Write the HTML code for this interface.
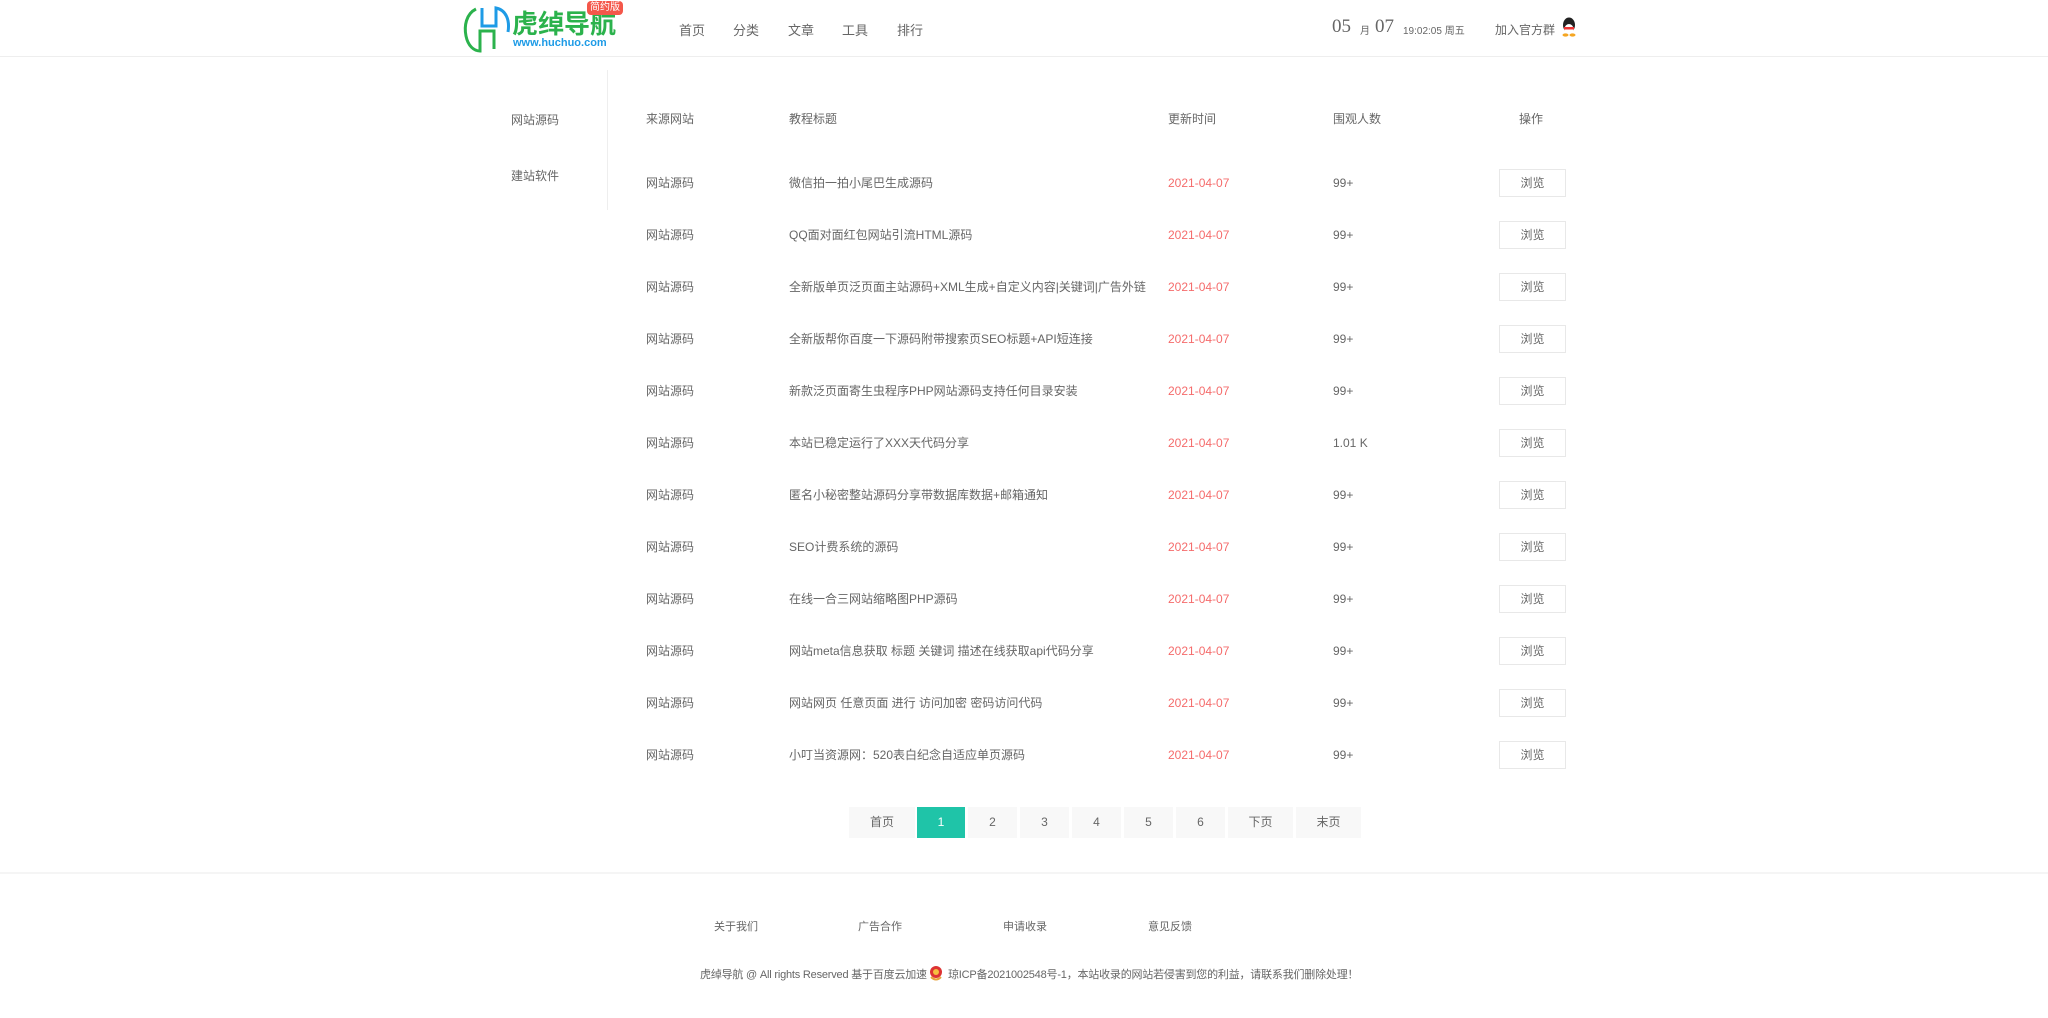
<!DOCTYPE html>
<html><head><meta charset="utf-8">
<style>
*{margin:0;padding:0;box-sizing:border-box}
body{width:2048px;height:1018px;background:#fff;font-family:"Liberation Sans","Noto Sans CJK SC",sans-serif;color:#666;font-size:12px;position:relative;overflow:hidden}
.a{position:absolute;white-space:nowrap}
.hd{position:absolute;left:0;top:0;width:2048px;height:57px;border-bottom:1px solid #eee}
.nav{top:20px;font-size:13px;color:#666}
.row{position:absolute;left:0;width:2048px;height:20px}
.row span{position:absolute;top:0;line-height:20px;white-space:nowrap;font-size:12px}
.btn{position:absolute;left:1499px;width:67px;height:28px;border:1px solid #e8e8e8;text-align:center;line-height:26px;font-size:12px;color:#666}
.pg{position:absolute;top:807px;height:31px;background:#f8f8f8;text-align:center;line-height:31px;font-size:12px;color:#666}
.red{color:#f56c6c}
</style></head><body>
<div class="hd"></div>
<svg class="a" style="left:462px;top:4px" width="52" height="50" viewBox="0 0 52 50">
<path d="M14 5 C4 10 2 22 4 32 C6 42 12 47 18 47 L18 27 L32 27 L32 45" fill="none" stroke="#2bb24c" stroke-width="3"/>
<path d="M20 4 L20 22 L34 22 L34 4 C44 6 48 16 46 28" fill="none" stroke="#1e9be6" stroke-width="3"/>
</svg>
<div class="a" style="left:512px;top:9px;font-size:26px;font-weight:bold;color:#2bb24c;letter-spacing:0;line-height:30px">虎绰导航</div>
<div class="a" style="left:513px;top:37px;font-size:11px;font-weight:bold;color:#1e9be6;line-height:12px">www.huchuo.com</div>
<div class="a" style="left:587px;top:1px;width:36px;height:14px;background:#f4574a;border-radius:4px;color:#fff;font-size:10px;line-height:14px;text-align:center">简约版</div>
<div class="a nav" style="left:679px">首页</div>
<div class="a nav" style="left:733px">分类</div>
<div class="a nav" style="left:788px">文章</div>
<div class="a nav" style="left:842px">工具</div>
<div class="a nav" style="left:897px">排行</div>
<div class="a" style="left:1332px;top:16px;font-size:19px;font-family:'Liberation Serif',serif;color:#666">05</div>
<div class="a" style="left:1360px;top:22px;font-size:10px">月</div>
<div class="a" style="left:1375px;top:16px;font-size:19px;font-family:'Liberation Serif',serif;color:#666">07</div>
<div class="a" style="left:1403px;top:22px;font-size:10px">19:02:05 周五</div>
<div class="a" style="left:1495px;top:21px;font-size:12px">加入官方群</div>
<svg class="a" style="left:1561px;top:17px" width="16" height="20" viewBox="0 0 16 20">
<ellipse cx="8" cy="8" rx="6" ry="7.5" fill="#222"/><ellipse cx="8" cy="12" rx="4.5" ry="5" fill="#fff"/>
<rect x="3" y="10" width="10" height="2.5" fill="#e33"/><ellipse cx="4.5" cy="18" rx="3" ry="1.6" fill="#f5a623"/><ellipse cx="11.5" cy="18" rx="3" ry="1.6" fill="#f5a623"/></svg>
<div class="a" style="left:607px;top:70px;width:1px;height:140px;background:#eee"></div>
<div class="a" style="left:511px;top:111px">网站源码</div>
<div class="a" style="left:511px;top:167px">建站软件</div>
<div class="row" style="top:109px"><span style="left:646px">来源网站</span><span style="left:789px">教程标题</span><span style="left:1168px">更新时间</span><span style="left:1333px">围观人数</span><span style="left:1519px">操作</span></div>

<div class="row" style="top:173px"><span style="left:646px">网站源码</span><span style="left:789px">微信拍一拍小尾巴生成源码</span><span class="red" style="left:1168px">2021-04-07</span><span style="left:1333px">99+</span></div><div class="btn" style="top:169px">浏览</div>
<div class="row" style="top:225px"><span style="left:646px">网站源码</span><span style="left:789px">QQ面对面红包网站引流HTML源码</span><span class="red" style="left:1168px">2021-04-07</span><span style="left:1333px">99+</span></div><div class="btn" style="top:221px">浏览</div>
<div class="row" style="top:277px"><span style="left:646px">网站源码</span><span style="left:789px">全新版单页泛页面主站源码+XML生成+自定义内容|关键词|广告外链</span><span class="red" style="left:1168px">2021-04-07</span><span style="left:1333px">99+</span></div><div class="btn" style="top:273px">浏览</div>
<div class="row" style="top:329px"><span style="left:646px">网站源码</span><span style="left:789px">全新版帮你百度一下源码附带搜索页SEO标题+API短连接</span><span class="red" style="left:1168px">2021-04-07</span><span style="left:1333px">99+</span></div><div class="btn" style="top:325px">浏览</div>
<div class="row" style="top:381px"><span style="left:646px">网站源码</span><span style="left:789px">新款泛页面寄生虫程序PHP网站源码支持任何目录安装</span><span class="red" style="left:1168px">2021-04-07</span><span style="left:1333px">99+</span></div><div class="btn" style="top:377px">浏览</div>
<div class="row" style="top:433px"><span style="left:646px">网站源码</span><span style="left:789px">本站已稳定运行了XXX天代码分享</span><span class="red" style="left:1168px">2021-04-07</span><span style="left:1333px">1.01 K</span></div><div class="btn" style="top:429px">浏览</div>
<div class="row" style="top:485px"><span style="left:646px">网站源码</span><span style="left:789px">匿名小秘密整站源码分享带数据库数据+邮箱通知</span><span class="red" style="left:1168px">2021-04-07</span><span style="left:1333px">99+</span></div><div class="btn" style="top:481px">浏览</div>
<div class="row" style="top:537px"><span style="left:646px">网站源码</span><span style="left:789px">SEO计费系统的源码</span><span class="red" style="left:1168px">2021-04-07</span><span style="left:1333px">99+</span></div><div class="btn" style="top:533px">浏览</div>
<div class="row" style="top:589px"><span style="left:646px">网站源码</span><span style="left:789px">在线一合三网站缩略图PHP源码</span><span class="red" style="left:1168px">2021-04-07</span><span style="left:1333px">99+</span></div><div class="btn" style="top:585px">浏览</div>
<div class="row" style="top:641px"><span style="left:646px">网站源码</span><span style="left:789px">网站meta信息获取 标题 关键词 描述在线获取api代码分享</span><span class="red" style="left:1168px">2021-04-07</span><span style="left:1333px">99+</span></div><div class="btn" style="top:637px">浏览</div>
<div class="row" style="top:693px"><span style="left:646px">网站源码</span><span style="left:789px">网站网页 任意页面 进行 访问加密 密码访问代码</span><span class="red" style="left:1168px">2021-04-07</span><span style="left:1333px">99+</span></div><div class="btn" style="top:689px">浏览</div>
<div class="row" style="top:745px"><span style="left:646px">网站源码</span><span style="left:789px">小叮当资源网：520表白纪念自适应单页源码</span><span class="red" style="left:1168px">2021-04-07</span><span style="left:1333px">99+</span></div><div class="btn" style="top:741px">浏览</div>

<div class="pg" style="left:849px;width:66px">首页</div>
<div class="pg" style="left:917px;width:48px;background:#1fc4a8;color:#fff">1</div>
<div class="pg" style="left:968px;width:49px">2</div>
<div class="pg" style="left:1020px;width:49px">3</div>
<div class="pg" style="left:1072px;width:49px">4</div>
<div class="pg" style="left:1124px;width:49px">5</div>
<div class="pg" style="left:1176px;width:49px">6</div>
<div class="pg" style="left:1228px;width:65px">下页</div>
<div class="pg" style="left:1296px;width:65px">末页</div>
<div class="a" style="left:0;top:872px;width:2048px;height:2px;background:#f5f5f5"></div>
<div class="a" style="left:714px;top:918px;font-size:11px">关于我们</div>
<div class="a" style="left:858px;top:918px;font-size:11px">广告合作</div>
<div class="a" style="left:1003px;top:918px;font-size:11px">申请收录</div>
<div class="a" style="left:1148px;top:918px;font-size:11px">意见反馈</div>
<div class="a" style="left:700px;top:966px;font-size:11px;letter-spacing:-0.2px">虎绰导航 @ All rights Reserved 基于百度云加速</div>
<svg class="a" style="left:929px;top:965px" width="14" height="16" viewBox="0 0 14 16"><circle cx="7" cy="7" r="6" fill="#d33"/><circle cx="7" cy="7" r="3" fill="#f5c040"/><path d="M2 12 Q7 17 12 12" fill="none" stroke="#e8a33a" stroke-width="2"/></svg>
<div class="a" style="left:948px;top:966px;font-size:11px;letter-spacing:-0.2px">琼ICP备2021002548号-1，本站收录的网站若侵害到您的利益，请联系我们删除处理！</div>
</body></html>
